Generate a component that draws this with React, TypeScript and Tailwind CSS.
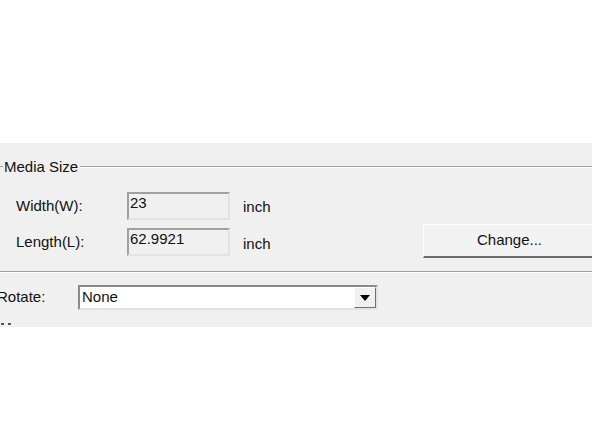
export default function App() {
  return (
    <div className="w-[592px] h-[444px] bg-white overflow-hidden text-[15px] text-[#111]" style={{ fontFamily: '"Liberation Sans", Arial, sans-serif' }}>
      <div className="h-[143px]" />
      <div className="h-[184px] bg-[#f0f0f0] flex flex-col">
        {/* Group header */}
        <div className="mt-[15px] h-[17px] flex items-center">
          <div className="w-[3px] h-px bg-[#a0a0a0]" />
          <span className="ml-[1px] leading-[17px]">Media Size</span>
          <div className="flex-1 ml-[2px] flex flex-col">
            <div className="h-px bg-[#a0a0a0]" />
            <div className="h-px bg-white" />
          </div>
        </div>

        {/* Width */}
        <div className="mt-[17px] h-[28px] flex items-center">
          <span className="ml-[16px] w-[111px]">Width(W):</span>
          <div className="w-[103px] h-[28px] border-2 border-t-[#a0a0a0] border-l-[#a0a0a0] border-b-[#e3e3e3] border-r-[#e3e3e3] bg-[#f0f0f0] px-[1px] leading-[18px]">23</div>
          <span className="ml-[13px] mt-[2px]">inch</span>
        </div>

        {/* Length */}
        <div className="mt-[8px] h-[28px] flex items-center">
          <span className="ml-[16px] w-[111px]">Length(L):</span>
          <div className="w-[103px] h-[28px] border-2 border-t-[#a0a0a0] border-l-[#a0a0a0] border-b-[#e3e3e3] border-r-[#e3e3e3] bg-[#f0f0f0] px-[1px] leading-[18px]">62.9921</div>
          <span className="ml-[13px] mt-[4px]">inch</span>
          <button className="ml-auto -mr-[4px] -mt-[2px] w-[173px] h-[34px] bg-[#f2f2f2] border border-t-white border-l-white border-r-[#a0a0a0] border-b-2 border-b-[#6d6d6d] flex items-center justify-center">
            Change...
          </button>
        </div>

        {/* Separator */}
        <div className="mt-[15px] flex flex-col">
          <div className="h-px bg-[#a0a0a0]" />
          <div className="h-px bg-white" />
        </div>

        {/* Rotate */}
        <div className="mt-[12px] h-[25px] flex items-center">
          <span className="-ml-[3px] w-[81px]">Rotate:</span>
          <div className="w-[300px] h-[25px] bg-white border-2 border-t-[#8a8a8a] border-l-[#8a8a8a] border-b-[#e3e3e3] border-r-[#e3e3e3] flex items-center">
            <span className="ml-[2px] flex-1">None</span>
            <div className="w-[22px] h-[21px] bg-[#f0f0f0] border border-t-white border-l-white border-r-[#707070] border-b-[#707070] flex items-center justify-center">
              <svg width="10" height="6" viewBox="0 0 10 6">
                <path d="M0 0h10L5 6z" fill="#000" />
              </svg>
            </div>
          </div>
        </div>

        <div className="mt-[13px] ml-[1px] flex gap-[4px]">
          <div className="w-[3px] h-[2px] bg-[#555]" />
          <div className="w-[3px] h-[2px] bg-[#555]" />
        </div>
      </div>
    </div>
  );
}
